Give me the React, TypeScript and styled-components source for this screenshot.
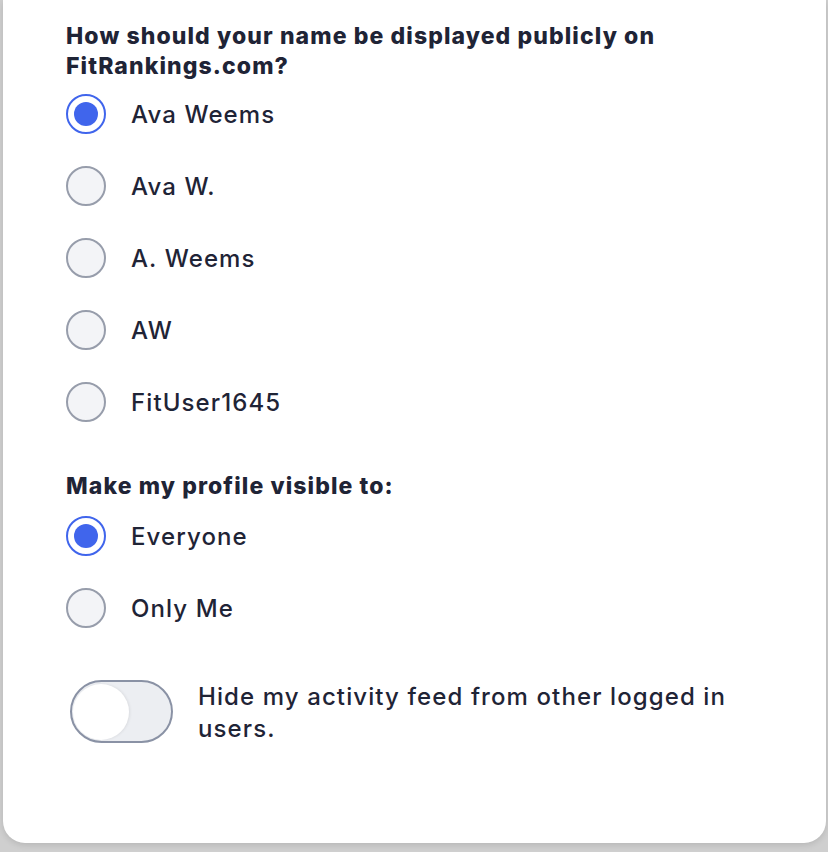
import React, { useState } from 'react';
import styled, { createGlobalStyle } from 'styled-components';

const GlobalStyle = createGlobalStyle`
  html, body {
    margin: 0;
    padding: 0;
    background: #cfcfcf;
  }
  body {
    font-family: Inter, "Noto Sans", "Liberation Sans", sans-serif;
    -webkit-font-smoothing: antialiased;
  }
`;

const Page = styled.div`
  width: 828px;
  height: 852px;
  padding: 0 2px 9px 3px;
  box-sizing: border-box;
`;

const Card = styled.div`
  height: 100%;
  background: #ffffff;
  border-radius: 0 0 22px 22px;
  box-shadow: 0 2px 6px rgba(0, 0, 0, 0.12);
  padding: 21px 64px 0 63px;
  box-sizing: border-box;
  color: #1f2436;
`;

const Heading = styled.h2<{ $top?: number; $bottom?: number }>`
  margin: ${(p) => p.$top ?? 0}px 0 ${(p) => p.$bottom ?? 13}px;
  font-size: 23px;
  line-height: 30px;
  font-weight: 800;
  letter-spacing: 1.1px;
  max-width: 640px;
`;

const Options = styled.div`
  display: flex;
  flex-direction: column;
  gap: 32px;
`;

const Option = styled.label`
  display: flex;
  align-items: center;
  gap: 25px;
  height: 40px;
  cursor: pointer;
  font-size: 24px;
  font-weight: 500;
  letter-spacing: 1.1px;
`;

const Radio = styled.span<{ $checked: boolean }>`
  width: 40px;
  height: 40px;
  box-sizing: border-box;
  border-radius: 50%;
  flex-shrink: 0;
  border: 2px solid ${(p) => (p.$checked ? '#4065ec' : '#979dab')};
  background: ${(p) => (p.$checked ? '#ffffff' : '#f3f4f7')};
  display: flex;
  align-items: center;
  justify-content: center;

  &::after {
    content: '';
    width: 24px;
    height: 24px;
    border-radius: 50%;
    background: #4065ec;
    display: ${(p) => (p.$checked ? 'block' : 'none')};
  }
`;

const ToggleRow = styled.div`
  display: flex;
  align-items: flex-start;
  gap: 25px;
  margin-top: 52px;
  padding-left: 4px;
`;

const Track = styled.button<{ $on: boolean }>`
  width: 103px;
  height: 63px;
  flex-shrink: 0;
  box-sizing: border-box;
  border-radius: 32px;
  border: 2px solid #8a92a5;
  background: ${(p) => (p.$on ? '#4065ec' : '#eceef2')};
  padding: 1px;
  display: flex;
  justify-content: ${(p) => (p.$on ? 'flex-end' : 'flex-start')};
  align-items: center;
  cursor: pointer;

  &::before {
    content: '';
    width: 56px;
    height: 56px;
    border-radius: 50%;
    background: #ffffff;
    box-shadow: 1px 0 3px rgba(0, 0, 0, 0.08);
  }
`;

const ToggleLabel = styled.span`
  font-size: 24px;
  line-height: 32px;
  font-weight: 500;
  letter-spacing: 1.1px;
  padding-top: 1px;
`;

const names = ['Ava Weems', 'Ava W.', 'A. Weems', 'AW', 'FitUser1645'];
const visibility = ['Everyone', 'Only Me'];

export default function App() {
  const [name, setName] = useState(0);
  const [visible, setVisible] = useState(0);
  const [hidden, setHidden] = useState(false);

  return (
    <Page>
      <GlobalStyle />
      <Card>
        <Heading>How should your name be displayed publicly on FitRankings.com?</Heading>
        <Options>
          {names.map((n, i) => (
            <Option key={n} onClick={() => setName(i)}>
              <Radio $checked={name === i} />
              {n}
            </Option>
          ))}
        </Options>

        <Heading $top={49} $bottom={15}>Make my profile visible to:</Heading>
        <Options>
          {visibility.map((v, i) => (
            <Option key={v} onClick={() => setVisible(i)}>
              <Radio $checked={visible === i} />
              {v}
            </Option>
          ))}
        </Options>

        <ToggleRow>
          <Track $on={hidden} onClick={() => setHidden(!hidden)} aria-pressed={hidden} />
          <ToggleLabel>Hide my activity feed from other logged in users.</ToggleLabel>
        </ToggleRow>
      </Card>
    </Page>
  );
}
